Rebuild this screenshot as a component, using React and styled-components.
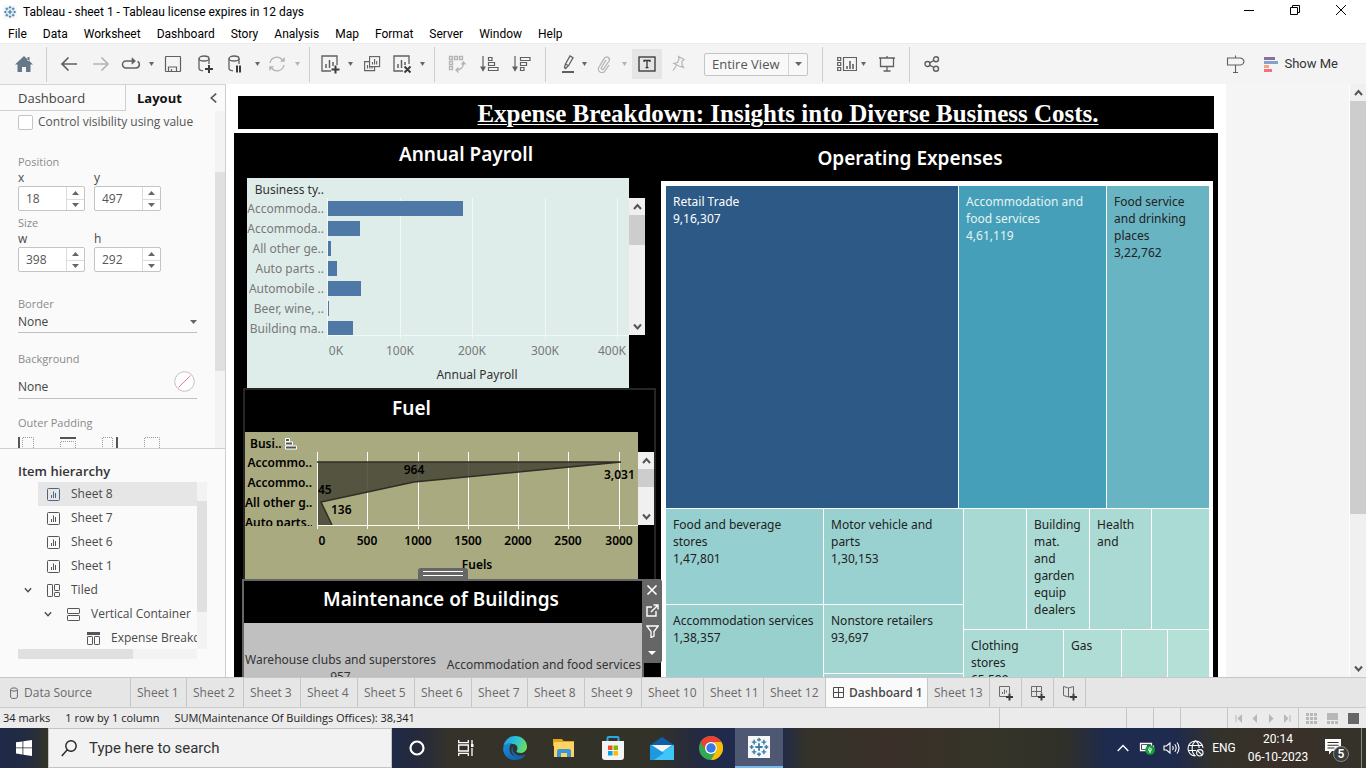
import React from "react";
import styled, { createGlobalStyle, css } from "styled-components";

const ui = `"Open Sans", "Noto Sans", sans-serif`;
const book = `"Noto Sans", "Open Sans", sans-serif`;
const roboto = `Roboto, "Liberation Sans", sans-serif`;

const Global = createGlobalStyle`
  * { box-sizing: border-box; }
  html, body { margin: 0; height: 100%; }
  #root { height: 100%; }
  button, input, select { font: inherit; color: inherit; }
  button { border: 0; background: none; padding: 0; margin: 0; }
  ul, ol { list-style: none; margin: 0; padding: 0; }
  h1, h2, h3, p { margin: 0; font-weight: normal; }
`;

/* ---------- window frame ---------- */
const Window = styled.div`
  display: flex;
  flex-direction: column;
  height: 100vh;
  background: #fff;
  color: #333;
  font: 12px/16px ${ui};
  overflow: hidden;
`;
const TitleBar = styled.header`
  display: flex;
  align-items: center;
  height: 24px;
  flex: none;
  padding-left: 3px;
  gap: 6px;
  color: #000;
  font-family: ${roboto};
`;
const WindowButtons = styled.div`
  display: flex;
  margin-left: auto;
  padding-right: 2px;
  height: 20px;
  align-self: flex-start;
`;
const WindowButton = styled.button`
  display: grid;
  place-items: center;
  width: 46px;
  color: #000;
`;
const MenuBar = styled.nav`
  display: flex;
  align-items: center;
  flex: none;
  height: 19px;
  padding-left: 8px;
  gap: 16px;
  color: #000;
  font-family: ${roboto};
`;
const MenuItem = styled.button`
  line-height: 16px;
`;

/* ---------- toolbar ---------- */
const ToolBar = styled.div`
  display: flex;
  align-items: center;
  flex: none;
  height: 41px;
  background: #f4f4f4;
  border-top: 1px solid #ececec;
  padding: 0 28px 0 12px;
  color: #555;
`;
const Tool = styled.button`
  display: grid;
  place-items: center;
  width: ${(p) => (p.$boxed ? 30 : 24)}px;
  height: 30px;
  flex: none;
  margin-left: ${(p) => p.$ml || 0}px;
  color: ${(p) => (p.$dim ? "#b4b4b4" : "#606060")};
  background: ${(p) => (p.$boxed ? "#e5e5e5" : "transparent")};
`;
const GuideTool = styled(Tool)`
  margin-left: auto;
`;
const CaretButton = styled.button`
  display: grid;
  place-items: center;
  width: 8px;
  height: 24px;
  flex: none;
  margin-left: ${(p) => p.$ml || 0}px;
  color: ${(p) => (p.$dim ? "#b4b4b4" : "#666")};
`;
const Divider = styled.span`
  width: 1px;
  height: 35px;
  flex: none;
  margin-left: ${(p) => p.$ml}px;
  background: #cfcfcf;
`;
const FitBox = styled.div`
  position: relative;
  display: flex;
  align-items: center;
  flex: none;
  width: 104px;
  height: 23px;
  margin-left: 14px;
  background: #f8f8f8;
  border: 1px solid #c4c4c4;
  border-radius: 2px;
`;
const FitSelect = styled.select`
  appearance: none;
  border: 0;
  background: none;
  width: 100%;
  height: 21px;
  padding: 0 0 0 7px;
  font: 13px/20px ${ui};
  color: #555;
`;
const FitArrow = styled.span`
  position: absolute;
  right: 0;
  top: 0;
  display: grid;
  place-items: center;
  width: 19px;
  height: 21px;
  border-left: 1px solid #d4d4d4;
  color: #666;
  pointer-events: none;
`;
const ShowMe = styled.button`
  display: flex;
  align-items: center;
  gap: 6px;
  margin-left: 16px;
  font: 13px/20px ${roboto};
  color: #333;
`;

/* ---------- side pane ---------- */
const Body = styled.div`
  display: flex;
  flex: 1;
  min-height: 0;
`;
const SidePane = styled.aside`
  display: flex;
  flex-direction: column;
  flex: none;
  width: 226px;
  background: #fafafa;
  border-top: 1px solid #d4d4d4;
  border-right: 1px solid #cfcfcf;
  color: #4a4a4a;
`;
const PaneTabs = styled.div`
  display: flex;
  flex: none;
  height: 26px;
`;
const PaneTab = styled.button`
  text-align: left;
  font: ${(p) => (p.$on ? 700 : 400)} 13px/24px ${ui};
  color: ${(p) => (p.$on ? "#111" : "#444")};
  ${(p) =>
    p.$on
      ? css`
          flex: 1;
          padding-left: 11px;
        `
      : css`
          width: 126px;
          padding-left: 18px;
          border-right: 1px solid #cfcfcf;
          border-bottom: 1px solid #cfcfcf;
        `}
`;
const Collapse = styled.button`
  display: grid;
  place-items: center;
  width: 22px;
  color: #555;
`;
const Properties = styled.div`
  display: flex;
  flex: 1;
  min-height: 0;
  overflow: hidden;
  border-bottom: 1px solid #cfcfcf;
`;
const PropertyForm = styled.form`
  flex: 1;
  min-width: 0;
  padding: 3px 18px 0;
`;
const CheckRow = styled.label`
  display: flex;
  align-items: center;
  gap: 5px;
  height: 16px;
  white-space: nowrap;
  color: #555;
`;
const Check = styled.input`
  appearance: none;
  width: 15px;
  height: 15px;
  margin: 0;
  flex: none;
  background: #fff;
  border: 1px solid #c4c4c4;
  border-radius: 2px;
`;
const Caption = styled.div`
  display: block;
  margin-top: ${(p) => p.$mt}px;
  font-size: 11px;
  line-height: 16px;
  color: #8a8a8a;
`;
const Pair = styled.div`
  display: flex;
  gap: 9px;
`;
const SpinField = styled.div`
  width: 67px;
`;
const SpinLabel = styled.label`
  display: block;
  line-height: 16px;
`;
const SpinBox = styled.div`
  display: flex;
  height: 25px;
  background: #fff;
  border: 1px solid #c4c4c4;
  border-radius: 2px;
`;
const SpinInput = styled.input`
  width: 47px;
  min-width: 0;
  border: 0;
  background: none;
  padding: 0 0 0 7px;
  color: #555;
`;
const SpinButtons = styled.div`
  display: grid;
  grid-template-rows: 1fr 1fr;
  flex: 1;
  border-left: 1px solid #dcdcdc;
`;
const SpinButton = styled.button`
  display: grid;
  place-items: center;
  color: #666;
  & + & {
    border-top: 1px solid #dcdcdc;
  }
`;
const LineField = styled.div`
  position: relative;
  display: flex;
  align-items: center;
  justify-content: space-between;
  height: ${(p) => (p.$tall ? 24 : 21)}px;
  margin-top: ${(p) => (p.$tall ? 8 : 0)}px;
  border-bottom: 1px solid #c0c0c0;
  color: #444;
`;
const LineSelect = styled.select`
  appearance: none;
  width: 100%;
  border: 0;
  padding: 0;
  background: none;
`;
const LineArrow = styled.span`
  position: absolute;
  right: 0;
  color: #666;
  line-height: 0;
  pointer-events: none;
`;
const Swatch = styled.button`
  align-self: flex-start;
  margin: -4px 2px 0 0;
  line-height: 0;
`;
const PaddingRow = styled.div`
  display: flex;
  gap: 26px;
  margin-top: 6px;
`;
const ThinTrack = styled.div`
  flex: none;
  width: 10px;
  padding-top: ${(p) => p.$offset}px;
  background: #f3f3f3;
`;
const ThinThumb = styled.div`
  height: ${(p) => p.$size}px;
  background: #e0e0e0;
`;
const Hierarchy = styled.section`
  flex: none;
  height: 228px;
  padding: 12px 18px 0;
`;
const HierarchyTitle = styled.h2`
  font: 600 13px/21px ${ui};
  color: #333;
`;
const TreeFrame = styled.div`
  display: flex;
`;
const Tree = styled.ul`
  width: 179px;
  height: 167px;
  overflow: hidden;
`;
const TreeRow = styled.li`
  display: flex;
  align-items: center;
  height: 24px;
  padding-left: ${(p) => p.$depth * 20}px;
  white-space: nowrap;
`;
const TreeToggle = styled.span`
  display: grid;
  place-items: center;
  width: 20px;
  flex: none;
`;
const TreeLabel = styled.button`
  display: flex;
  align-items: center;
  flex: 1 0 auto;
  height: 24px;
  gap: 11px;
  padding-left: 9px;
  background: ${(p) => (p.$on ? "#e6e6e6" : "transparent")};
  svg {
    color: ${(p) => (p.$on ? "#4a6785" : "#555")};
  }
`;
const FlatTrack = styled.div`
  width: 179px;
  height: 10px;
  background: #f3f3f3;
`;
const FlatThumb = styled.div`
  width: 115px;
  height: 10px;
  background: #e0e0e0;
`;

/* ---------- dashboard ---------- */
const Viewport = styled.main`
  display: flex;
  flex: 1;
  min-width: 0;
  overflow: hidden;
  background: #f5f5f5;
`;
const Dashboard = styled.div`
  flex: 0 1 1000px;
  background: #fff;
  padding: 12px 8px 0;
`;
const Banner = styled.h1`
  height: 33px;
  margin: 0 4px 4px;
  padding-left: 124px;
  background: #000;
  color: #fff;
  text-align: center;
  text-decoration: underline;
  text-decoration-thickness: 1px;
  text-underline-offset: 2px;
  font: bold 25px/36px "Liberation Serif", serif;
  white-space: nowrap;
  overflow: hidden;
`;
const Board = styled.div`
  display: flex;
  background: #000;
  padding: 0 5px 0 8px;
  min-height: 700px;
`;
const LeftColumn = styled.div`
  flex: none;
  width: 419px;
`;
const RightColumn = styled.div`
  flex: 1;
  min-width: 0;
`;
const SheetTitle = styled.h2`
  height: ${(p) => p.$h}px;
  line-height: ${(p) => p.$lh}px;
  padding-left: ${(p) => p.$pl || 0}px;
  padding-right: ${(p) => p.$pr || 0}px;
  font-family: ${book};
  font-size: 19px;
  font-weight: 600;
  color: #fff;
  text-align: center;
`;
const PayrollSheet = styled.section`
  display: flex;
  align-items: flex-start;
  height: 210px;
  margin-left: 5px;
`;
const PayrollView = styled.div`
  display: flex;
  width: 382px;
  height: 100%;
  background: #dfedea;
`;
const PayrollLabels = styled.ul`
  width: 77px;
  margin-right: -2px;
  flex: none;
  height: 157px;
  overflow: hidden;
  text-align: right;
  white-space: nowrap;
  font: 12px/20px ${book};
  color: #787878;
`;
const PayrollHead = styled.li`
  height: 21px;
  line-height: 23px;
  color: #333;
`;
const PayrollName = styled.li`
  height: 20px;
`;
const SheetScroll = styled.div`
  display: flex;
  flex-direction: column;
  flex: none;
  width: 16px;
  height: ${(p) => p.$h}px;
  margin-top: 20px;
  background: #f0f0f0;
`;
const ScrollButton = styled.button`
  display: grid;
  place-items: center;
  width: 100%;
  height: 17px;
  flex: none;
  color: #555;
`;
const ScrollThumb = styled.div`
  height: ${(p) => p.$size}px;
  margin-bottom: auto;
  background: #cdcdcd;
`;
const FuelSheet = styled.section`
  width: 413px;
  margin-left: 1px;
  border: 2px solid #262626;
  border-bottom: 0;
`;
const FuelBody = styled.div`
  display: flex;
`;
const FuelView = styled.div`
  display: flex;
  width: 393px;
  height: 147px;
  background: #a9aa7f;
`;
const FuelLabels = styled.ul`
  width: 67px;
  flex: none;
  height: 94px;
  overflow: hidden;
  text-align: right;
  white-space: nowrap;
  font: 600 12px/20px ${book};
  color: #000;
`;
const FuelHead = styled.li`
  display: flex;
  align-items: center;
  gap: 3px;
  height: 21px;
  padding: 2px 0 0 5px;
`;
const FuelName = styled.li`
  height: 20px;
`;
const SelectedCard = styled.section`
  position: relative;
  width: 402px;
  border: 2px solid #666;
`;
const Grip = styled.span`
  position: absolute;
  left: 174px;
  top: -13px;
  display: grid;
  place-items: center;
  width: 50px;
  height: 12px;
  background: #666;
  border-radius: 3px 3px 0 0;
`;
const CardTools = styled.div`
  position: absolute;
  left: 398px;
  top: -2px;
  display: flex;
  flex-direction: column;
  align-items: center;
  width: 20px;
  height: 84px;
  background: #666;
  border-radius: 0 3px 3px 0;
`;
const CardTool = styled.button`
  display: grid;
  place-items: center;
  height: 21px;
  color: #fff;
`;
const CardBody = styled.div`
  display: flex;
  justify-content: space-between;
  height: 160px;
  padding: 28px 1px 0;
  background: #c0c0c0;
  font: 12px/17px ${book};
  color: #333;
  white-space: nowrap;
  text-align: center;
`;
const BubbleLabel = styled.p`
  padding-top: ${(p) => p.$drop || 0}px;
`;
const TreemapFrame = styled.section`
  display: flex;
  flex-direction: column;
  gap: 1px;
  padding: 5px 4px 5px 5px;
  background: #fff;
  font: 12px/17px ${book};
`;
const MapGrid = styled.div`
  display: grid;
  grid-template-columns: ${(p) => p.$cols || "1fr"};
  grid-template-rows: ${(p) => p.$rows || "1fr"};
  gap: 1px;
  min-width: 0;
`;
const Cell = styled.div`
  padding: 7px 8px 0 7px;
  min-width: 0;
  overflow: hidden;
  background: ${(p) => p.$bg};
  color: ${(p) => p.$fg || "#222"};
`;
const PageScroll = styled.div`
  display: flex;
  flex-direction: column;
  flex: none;
  width: 17px;
  margin-left: auto;
  background: #f0f0f0;
  border-left: 1px solid #fff;
`;

/* ---------- sheet tabs and status ---------- */
const SheetTabs = styled.nav`
  position: relative;
  display: flex;
  flex: none;
  height: 31px;
  background: #e6e6e6;
  border-top: 1px solid #c6c6c6;
  border-bottom: 1px solid #cacaca;
  font: 12px/28px ${ui};
  color: #6a6a6a;
`;
const SheetTab = styled.button`
  display: flex;
  align-items: center;
  gap: 6px;
  flex: none;
  width: ${(p) => p.$w}px;
  padding-left: ${(p) => p.$pl || 6}px;
  border-right: 1px solid #c6c6c6;
  white-space: nowrap;
  ${(p) =>
    p.$on &&
    css`
      gap: 5px;
      background: #fafafa;
      font-weight: 600;
      color: #4a4a4a;
    `}
`;
const StatusBar = styled.footer`
  display: flex;
  align-items: center;
  flex: none;
  height: 20px;
  padding-left: 3px;
  background: #ebebeb;
  font: 11px/16px ${ui};
  color: #222;
`;
const StatusText = styled.span`
  margin-right: 15px;
  white-space: nowrap;
`;
const StatusSlots = styled.div`
  display: flex;
  margin-left: auto;
  height: 20px;
`;
const Slot = styled.div`
  display: flex;
  align-items: center;
  justify-content: center;
  gap: ${(p) => p.$gap || 0}px;
  width: ${(p) => p.$w}px;
  border-left: 1px solid #c6c6c6;
  color: ${(p) => p.$fg || "#b8b8b8"};
`;
const SlotButton = styled.button`
  line-height: 0;
  color: inherit;
`;

/* ---------- taskbar ---------- */
const TaskBar = styled.footer`
  display: flex;
  flex: none;
  height: 40px;
  color: #fff;
  background: linear-gradient(
    90deg,
    #1f2a48 0,
    #232b42 2%,
    #33332a 3.4%,
    #1f2a48 28.5%,
    #24293c 30.5%,
    #353329 33%,
    #333228 48%,
    #242a40 51%,
    #1f2a4c 53%,
    #1f2a4c 57%,
    #34322a 59%,
    #3a3029 65%,
    #353428 73%,
    #30302a 78%,
    #1e2a4e 81%,
    #1e2a4e 86%,
    #33322a 89%,
    #3a3029 94%,
    #33332a 100%
  );
`;
const TaskButton = styled.button`
  display: grid;
  place-items: center;
  width: ${(p) => (p.$start ? 48 : 49)}px;
  flex: none;
  ${(p) =>
    p.$on &&
    css`
      width: 48px;
      background: #4e5872;
      border-bottom: 2px solid #76b9ed;
    `}
`;
const Search = styled.label`
  display: flex;
  align-items: center;
  gap: 12px;
  flex: none;
  width: 344px;
  padding-left: 12px;
  background: #f2f2f2;
  border: 1px solid #c4c4c4;
  color: #222;
`;
const SearchInput = styled.input`
  flex: 1;
  min-width: 0;
  border: 0;
  background: none;
  padding: 0;
  font: 15px/20px ${roboto};
  &::placeholder {
    color: #333;
    opacity: 1;
  }
`;
const Tray = styled.div`
  display: flex;
  align-items: center;
  margin-left: auto;
  font: 12px/18px ${roboto};
`;
const TrayButton = styled.button`
  display: grid;
  place-items: center;
  width: 24px;
  height: 40px;
`;
const Language = styled.button`
  width: 34px;
`;
const Clock = styled.time`
  width: 74px;
  text-align: center;
`;
const Notice = styled.button`
  width: 46px;
  padding: 4px 2px 0 0;
  display: grid;
  place-items: center;
`;
const PeekDesktop = styled.span`
  width: 5px;
  height: 40px;
  border-left: 1px solid #8a8a82;
`;

/* ---------- icons ---------- */
const Icon = ({ w = 18, h = w, sw = 1.3, children, ...rest }) => (
  <svg
    width={w}
    height={h}
    viewBox={`0 0 ${w} ${h}`}
    fill="none"
    stroke="currentColor"
    strokeWidth={sw}
    aria-hidden="true"
    {...rest}
  >
    {children}
  </svg>
);

const Triangle = ({ up, w = 5 }) => (
  <svg width={w} height={4} viewBox="0 0 8 5" preserveAspectRatio="none" fill="currentColor" aria-hidden="true">
    <path d={up ? "M0 5h8L4 0z" : "M0 0h8L4 5z"} />
  </svg>
);

const Caret = ({ ml, dim, label }) => (
  <CaretButton $ml={ml} $dim={dim} aria-label={label}>
    <Triangle />
  </CaretButton>
);

const Chevron = ({ dir = "up", size = 9, sw = 2 }) => {
  const d = { up: "M1 7l3.500-4 3.500 4", down: "M1 2.500l3.500 4 3.500-4", left: "M6.500 .5l-4.500 4 4.500 4" }[dir];
  return (
    <svg width={size} height={size} viewBox="0 0 9 9" fill="none" stroke="currentColor" strokeWidth={sw} aria-hidden="true">
      <path d={d} />
    </svg>
  );
};

const plus = (x, y, r = 4) => <path d={`M${x - r} ${y}h${2 * r}M${x} ${y - r}v${2 * r}`} strokeWidth="2" stroke="#3c3c3c" />;

const logoMarks = [
  [8, 8, 3, 1.2],
  [8, 2, 1.6, 0.9],
  [8, 14, 1.6, 0.9],
  [2, 8, 1.6, 0.9],
  [14, 8, 1.6, 0.9],
  [4, 4, 1.9, 0.9],
  [12, 4, 1.9, 0.9],
  [4, 12, 1.9, 0.9],
  [12, 12, 1.9, 0.9],
];
const TableauMark = ({ size, color }) => (
  <svg width={size} height={size} viewBox="-1 -1 18 18" aria-hidden="true">
    <rect x="-1" y="-1" width="18" height="18" fill="#f6f8fa" />
    {logoMarks.map(([x, y, r, sw]) => (
      <path key={`${x}-${y}`} d={`M${x - r} ${y}h${2 * r}M${x} ${y - r}v${2 * r}`} stroke={color} strokeWidth={sw + 0.3} />
    ))}
  </svg>
);

const BarsIcon = () => (
  <Icon w={13} sw={1}>
    <rect x=".5" y=".5" width="12" height="12" rx="1" />
    <path d="M4.500 10V7M6.500 10V3.500M8.500 10V5" />
  </Icon>
);
const TiledIcon = () => (
  <Icon w={13} sw={1}>
    <rect x=".5" y=".5" width="5" height="12" rx=".6" />
    <rect x="7.500" y=".5" width="5" height="6" rx=".6" />
    <rect x="7.500" y="8.500" width="5" height="4" rx=".6" />
  </Icon>
);
const VerticalIcon = () => (
  <Icon w={13} sw={1}>
    <rect x=".5" y=".5" width="12" height="5" rx=".6" />
    <rect x=".5" y="7.500" width="12" height="5" rx=".6" />
  </Icon>
);
const HeaderIcon = () => (
  <Icon w={13} sw={1}>
    <path d="M0 1.500h13" strokeWidth="3" />
    <rect x=".5" y="4.500" width="5" height="8" rx=".6" />
    <rect x="7.500" y="4.500" width="5" height="8" rx=".6" />
  </Icon>
);

/* ---------- data ---------- */
const menus = ["File", "Data", "Worksheet", "Dashboard", "Story", "Analysis", "Map", "Format", "Server", "Window", "Help"];

const payroll = [
  ["Accommoda..", 186],
  ["Accommoda..", 44],
  ["All other ge..", 4],
  ["Auto parts ..", 12.5],
  ["Automobile ..", 46],
  ["Beer, wine, ..", 1.4],
  ["Building ma..", 35],
];

const tree = [
  { label: "Sheet 8", depth: 0, icon: BarsIcon, on: true },
  { label: "Sheet 7", depth: 0, icon: BarsIcon },
  { label: "Sheet 6", depth: 0, icon: BarsIcon },
  { label: "Sheet 1", depth: 0, icon: BarsIcon },
  { label: "Tiled", depth: 0, icon: TiledIcon, open: true },
  { label: "Vertical Container", depth: 1, icon: VerticalIcon, open: true },
  { label: "Expense Breakdown", depth: 2, icon: HeaderIcon },
];

const sheets = [
  ["Sheet 1", 56],
  ["Sheet 2", 57],
  ["Sheet 3", 57],
  ["Sheet 4", 57],
  ["Sheet 5", 57],
  ["Sheet 6", 57],
  ["Sheet 7", 56],
  ["Sheet 8", 57],
  ["Sheet 9", 57],
  ["Sheet 10", 62],
  ["Sheet 11", 60],
  ["Sheet 12", 62],
];

/* ---------- parts ---------- */
function Toolbar() {
  return (
    <ToolBar role="toolbar" aria-label="Main toolbar">
      <Tool aria-label="Start page">
        <svg width="18" height="16" viewBox="0 0 18 16" fill="#67778a" aria-hidden="true">
          <path d="M9 0L0 8.500h2.500V16h4.500v-5h4v5h4.500V8.500H18zM12.500 1h2v4h-2z" />
        </svg>
      </Tool>
      <Divider $ml={10} />
      <Tool $ml={10} aria-label="Undo">
        <Icon w={18} h={16} sw={1.7}><path d="M17 8H2M8.500 1.500L2 8l6.500 6.500" /></Icon>
      </Tool>
      <Tool $ml={8} $dim aria-label="Redo">
        <Icon w={18} h={16} sw={1.7}><path d="M1 8h15M9.500 1.500L16 8l-6.500 6.500" /></Icon>
      </Tool>
      <Tool $ml={6} aria-label="Replay">
        <Icon w={20} h={14} sw={1.5}>
          <path d="M12 4H5a3.500 3.500 0 000 7h10a3.500 3.500 0 001.500-6.600" />
          <path d="M11 .8L14.500 4 11 7.200z" fill="currentColor" strokeWidth=".6" />
        </Icon>
      </Tool>
      <Caret ml={4} label="Replay options" />
      <Tool $ml={6} aria-label="Save">
        <Icon w={18} sw={1.2}><rect x="1.500" y="1.500" width="15" height="15" rx=".5" /><path d="M4.500 16.500v-4.500h8v4.500M7.500 16.500v-2.500" /></Icon>
      </Tool>
      <Tool $ml={8} aria-label="New data source">
        <Icon w={18} h={20}>
          <ellipse cx="8" cy="4.500" rx="5" ry="2.500" />
          <path d="M3 4.500v10c0 1 1.500 2 4 2.300M13 4.500V10" />
          {plus(13, 15)}
        </Icon>
      </Tool>
      <Tool $ml={6} aria-label="Pause auto updates">
        <Icon w={18} h={20}>
          <ellipse cx="8" cy="4.500" rx="5" ry="2.500" />
          <path d="M3 4.500v10c0 1 1.500 2 4 2.300M13 4.500V10" />
          <path d="M11 11.500v7M14 11.500v7" strokeWidth="2" stroke="#3c3c3c" />
        </Icon>
      </Tool>
      <Caret ml={6} label="Update options" />
      <Tool $ml={4} $dim aria-label="Run update">
        <Icon w={18}>
          <path d="M2 8a7 7 0 0112.500-3M16 10a7 7 0 01-12.500 3" />
          <path d="M16.500 2.500v4h-4zM1.500 15.500v-4h4z" fill="currentColor" strokeWidth=".5" />
        </Icon>
      </Tool>
      <Caret ml={4} dim label="Run options" />
      <Divider $ml={8} />
      <Tool $ml={8} aria-label="New worksheet">
        <Icon w={20}>
          <path d="M11 17H2V2h15v9" />
          <path d="M6 14v-4M9.500 14V6M13 12V8" strokeWidth="1.500" />
          {plus(15.5, 15.5)}
        </Icon>
      </Tool>
      <Caret ml={4} label="New sheet options" />
      <Tool $ml={6} aria-label="Duplicate">
        <Icon w={18} sw={1.1}>
          <rect x="6.600" y="1.600" width="10" height="10" />
          <path d="M6.600 6.600h-5v9h10v-4M9.500 9.500V7M11.600 9.500V4M13.700 9.500V6M4.500 13.500V10M6.800 13.500V12M9 13.500V12" />
        </Icon>
      </Tool>
      <Tool $ml={6} aria-label="Clear sheet">
        <Icon w={20}>
          <path d="M11 17H2V2h15v8" />
          <path d="M6 14v-4M9.500 14V6M13 11V8" strokeWidth="1.500" />
          <path d="M12.500 12.500l6 6M18.500 12.500l-6 6" strokeWidth="2" stroke="#3c3c3c" />
        </Icon>
      </Tool>
      <Caret ml={4} label="Clear options" />
      <Divider $ml={8} />
      <Tool $ml={10} $dim aria-label="Swap rows and columns">
        <Icon w={18}>
          <path d="M1.500 1.500h3v3h-3zM6.500 1.500h3v3h-3zM11.500 1.500h3v3h-3zM1.500 6.500h3v3h-3zM1.500 11.500h3v3h-3z" />
          <path d="M15.500 8c.3 4-3 7-7 7M13.500 9.500l2-2.500 2 2.500M10.500 12.500L8 15l2.500 2.500" />
        </Icon>
      </Tool>
      <Tool $ml={8} aria-label="Sort ascending">
        <Icon w={19} h={16} sw={1.2}>
          <path d="M3 0v12" />
          <path d="M1 11l2 3.500L5 11z" fill="currentColor" />
          <path d="M8.500 1.500h3.500v3H8.500zM8.500 6.500h6v3h-6zM8.500 11.500h9.500v3H8.500z" />
        </Icon>
      </Tool>
      <Tool $ml={8} aria-label="Sort descending">
        <Icon w={19} h={16} sw={1.2}>
          <path d="M3 0v12" />
          <path d="M1 11l2 3.500L5 11z" fill="currentColor" />
          <path d="M8.500 1.500h9.500v3H8.500zM8.500 6.500h6v3h-6zM8.500 11.500h3.500v3H8.500z" />
        </Icon>
      </Tool>
      <Divider $ml={12} />
      <Tool $ml={10} aria-label="Highlight">
        <Icon w={14} h={18}>
          <path d="M3.500 12.500l1-3.500L9 1l3 1.700-4.500 8-3 2.800zM4.500 9l3 1.700" />
          <path d="M1 17h12" strokeWidth="2" />
        </Icon>
      </Tool>
      <Caret label="Highlight options" />
      <Tool $ml={4} $dim aria-label="Group members">
        <Icon w={16} h={18}>
          <path d="M10 5l-4.500 7.500a1.300 1.300 0 002.200 1.400L13 6a2.600 2.600 0 00-4.500-2.800L3 12a3.600 3.600 0 006 4l4-6" />
        </Icon>
      </Tool>
      <Caret ml={4} dim label="Group options" />
      <Tool $ml={4} $boxed aria-label="Show mark labels">
        <Icon w={18} h={16} sw={1.3} stroke="#333">
          <rect x="1" y="1" width="16" height="14" />
          <path d="M6 6V4.500h6V6M9 4.500v7M7.500 11.700h3" />
        </Icon>
      </Tool>
      <Tool $ml={4} $dim aria-label="Fix axes">
        <Icon w={14} h={18} sw={1.2}><path d="M7.500 1.500l5.500 3-2 1.500v4l1.500 2.500-4.500-1.500L3 8.500l3.500-1L8 4zM5.500 10.500L2 15.500" /></Icon>
      </Tool>
      <FitBox>
        <FitSelect aria-label="Fit" defaultValue="Entire View"><option>Entire View</option></FitSelect>
        <FitArrow><Triangle w={7} /></FitArrow>
      </FitBox>
      <Divider $ml={14} />
      <Tool $ml={12} aria-label="Show or hide cards">
        <Icon w={20} h={16} sw={1.2}>
          <path d="M.7 1.500h3v3h-3zM.7 6.500h3v3h-3zM.7 11.500h3v3h-3zM6.500 1.500h13v13h-13z" />
          <path d="M10 13v-3M13 13V5M16 13V8" strokeWidth="1.600" />
        </Icon>
      </Tool>
      <Caret label="Card options" />
      <Tool $ml={8} aria-label="Presentation mode">
        <Icon w={18} h={16}><path d="M1 2h16M2.500 2v8.500h13V2M9 0v2M9 10.500V15M5.500 15h7" /></Icon>
      </Tool>
      <Divider $ml={10} />
      <Tool $ml={10} aria-label="Share">
        <Icon w={16} sw={1.4}>
          <circle cx="3.500" cy="8" r="2.500" /><circle cx="12" cy="3.200" r="2.500" /><circle cx="12" cy="12.800" r="2.500" />
          <path d="M5.700 6.800l4-2.300M5.700 9.200l4 2.300" />
        </Icon>
      </Tool>
      <GuideTool aria-label="Guide">
        <Icon w={20} h={18} sw={1.1}><path d="M1.500 3h13q3 .5 3.500 3.500-.5 3-3.500 3.500h-13zM9.500 .5V3M9.500 10v7.500M7 17.500h5" /></Icon>
      </GuideTool>
      <ShowMe>
        <svg width="14" height="15" viewBox="0 0 14 15" aria-hidden="true">
          <path d="M0 0h11v3H0z" fill="#8d6f9b" /><path d="M0 4h14v3H0z" fill="#82a3cd" />
          <path d="M0 8h5v3H0z" fill="#f3a683" /><path d="M0 12h8v3H0z" fill="#f5707c" />
        </svg>
        Show Me
      </ShowMe>
    </ToolBar>
  );
}

function Spinner({ name, value }) {
  return (
    <SpinField>
      <SpinLabel htmlFor={`spin-${name}`}>{name}</SpinLabel>
      <SpinBox>
        <SpinInput id={`spin-${name}`} defaultValue={value} />
        <SpinButtons>
          <SpinButton type="button" aria-label={`Increase ${name}`}><Triangle up w={7} /></SpinButton>
          <SpinButton type="button" aria-label={`Decrease ${name}`}><Triangle w={7} /></SpinButton>
        </SpinButtons>
      </SpinBox>
    </SpinField>
  );
}

function LayoutPane() {
  const edges = ["M1 0v16", "M0 1h16", "M15 0v16", ""];
  const boxes = ["M4.500 16V.5H15.500V16", "M.5 16V4.500H15.500V16", "M.5 16V.5H10.500V16", "M.5 16V.5H15.500V16"];
  return (
    <SidePane>
      <PaneTabs>
        <PaneTab>Dashboard</PaneTab>
        <PaneTab $on>Layout</PaneTab>
        <Collapse aria-label="Collapse pane"><Chevron dir="left" size={10} sw={1.4} /></Collapse>
      </PaneTabs>
      <Properties>
        <PropertyForm>
          <CheckRow><Check type="checkbox" />Control visibility using value</CheckRow>
          <Caption $mt={24}>Position</Caption>
          <Pair><Spinner name="x" value="18" /><Spinner name="y" value="497" /></Pair>
          <Caption $mt={4}>Size</Caption>
          <Pair><Spinner name="w" value="398" /><Spinner name="h" value="292" /></Pair>
          <Caption as="label" htmlFor="border" $mt={24}>Border</Caption>
          <LineField>
            <LineSelect id="border" defaultValue="None"><option>None</option></LineSelect>
            <LineArrow><Triangle w={7} /></LineArrow>
          </LineField>
          <Caption $mt={18}>Background</Caption>
          <LineField $tall>
            <span>None</span>
            <Swatch type="button" aria-label="Background colour">
              <Icon w={21} sw={1}><circle cx="10.500" cy="10.500" r="9.800" fill="#fff" stroke="#c0c0c0" /><path d="M4.500 16.500l12-12" stroke="#e0808c" /></Icon>
            </Swatch>
          </LineField>
          <Caption $mt={16}>Outer Padding</Caption>
          <PaddingRow>
            {edges.map((edge, i) => (
              <svg key={boxes[i]} width="16" height="16" fill="none" stroke="#555" aria-hidden="true">
                <path d={boxes[i]} stroke="#999" strokeDasharray="1 1" />
                {edge && <path d={edge} strokeWidth="2" />}
              </svg>
            ))}
          </PaddingRow>
        </PropertyForm>
        <ThinTrack $offset={61}><ThinThumb $size={199} /></ThinTrack>
      </Properties>
      <Hierarchy>
        <HierarchyTitle>Item hierarchy</HierarchyTitle>
        <TreeFrame>
          <Tree>
            {tree.map(({ label, depth, icon: Glyph, on, open }) => (
              <TreeRow key={label} $depth={depth}>
                <TreeToggle>{open && <Chevron dir="down" size={8} sw={1.5} />}</TreeToggle>
                <TreeLabel $on={on}><Glyph />{label}</TreeLabel>
              </TreeRow>
            ))}
          </Tree>
          <ThinTrack $offset={19}><ThinThumb $size={111} /></ThinTrack>
        </TreeFrame>
        <FlatTrack><FlatThumb /></FlatTrack>
      </Hierarchy>
    </SidePane>
  );
}

function PayrollChart() {
  const step = 72.5;
  const ticks = [["0K", 14], ["100K", 78], ["200K", 150], ["300K", 223], ["400K", 290]];
  return (
    <svg width="307" height="210" fontFamily={book} fontSize="12" aria-label="Annual payroll by business type">
      {ticks.map(([t], i) => (
        <path key={t} d={`M${Math.round(5 + step * i) + 0.5} 20V161`} stroke="#f4f7f6" />
      ))}
      {payroll.map(([name, v], i) => (
        <rect key={i} x="6" y={23 + 20 * i} width={Math.max(1, Math.round((v * step) / 100))} height={i === 6 ? 14 : 15} fill="#4e79a7" />
      ))}
      <path d="M5 157.500h302" stroke="#f4f7f6" />
      {ticks.map(([t, x]) => (
        <text key={t} x={x} y="177" textAnchor="middle" fill="#787878">{t}</text>
      ))}
      <text x="155" y="201" textAnchor="middle" fill="#333">Annual Payroll</text>
    </svg>
  );
}

function FuelChart() {
  const grid = [5, 55, 106, 156, 206, 256, 307];
  const names = ["0", "500", "1000", "1500", "2000", "2500", "3000"];
  return (
    <svg width="326" height="147" fontFamily={book} fontSize="12" fontWeight="600" aria-label="Fuels by business type">
      {grid.map((x) => (
        <path key={x} d={`M${x + 0.5} 20V97`} stroke="#fff" />
      ))}
      <path d="M6 30H309L102 50 9 70 20 93H6z" fill="#484838" fillOpacity=".88" />
      <path d="M5 30H309L102 50 9 70 20 93" fill="none" stroke="#2e2e26" strokeWidth="1.500" />
      <path d="M5 93.500h321" stroke="#fff" />
      <g fill="#000">
        {names.map((n, i) => (
          <text key={n} x={i ? grid[i] : 10} y="113" textAnchor="middle">{n}</text>
        ))}
        <text x="102" y="42" textAnchor="middle">964</text>
        <text x="292" y="47">3,031</text>
        <text x="6" y="62">45</text>
        <text x="19" y="82">136</text>
        <text x="165" y="137" textAnchor="middle">Fuels</text>
      </g>
    </svg>
  );
}

function Scroller({ h, thumb }) {
  return (
    <SheetScroll $h={h}>
      <ScrollButton aria-label="Scroll up"><Chevron /></ScrollButton>
      <ScrollThumb $size={thumb} />
      <ScrollButton aria-label="Scroll down"><Chevron dir="down" /></ScrollButton>
    </SheetScroll>
  );
}

function Treemap() {
  return (
    <TreemapFrame>
      <MapGrid $cols="292fr 147fr 102fr" $rows="322px">
        <Cell $bg="#2c5985" $fg="#fff">Retail Trade<br />9,16,307</Cell>
        <Cell $bg="#469fb8" $fg="#e4f3f5">Accommodation and food services<br />4,61,119</Cell>
        <Cell $bg="#69b4c3">Food service and drinking places<br />3,22,762</Cell>
      </MapGrid>
      <MapGrid $cols="157fr 139fr 245fr">
        <MapGrid $rows="95px 180px">
          <Cell $bg="#95cfcf">Food and beverage stores<br />1,47,801</Cell>
          <Cell $bg="#98d0ce">Accommodation services<br />1,38,357</Cell>
        </MapGrid>
        <MapGrid $rows="95px 68px 111px">
          <Cell $bg="#99d1d0">Motor vehicle and parts<br />1,30,153</Cell>
          <Cell $bg="#a3d6d1">Nonstore retailers<br />93,697</Cell>
          <Cell $bg="#a3d6d1" />
        </MapGrid>
        <MapGrid $rows="120px 155px">
          <MapGrid $cols="62fr 62fr 61fr 57fr">
            <Cell $bg="#a8d9d3" />
            <Cell $bg="#a9dad3">Building mat. and garden equip dealers</Cell>
            <Cell $bg="#aadad3">Health and</Cell>
            <Cell $bg="#aadbd4" />
          </MapGrid>
          <MapGrid $cols="99fr 57fr 45fr 41fr">
            <Cell $bg="#acdbd5">Clothing<br />stores<br />65,589</Cell>
            <Cell $bg="#b0ddd6">Gas</Cell>
            <Cell $bg="#b3dfd6" />
            <Cell $bg="#b5e0d7" />
          </MapGrid>
        </MapGrid>
      </MapGrid>
    </TreemapFrame>
  );
}

function DashboardView() {
  return (
    <Viewport>
      <Dashboard>
        <Banner>Expense Breakdown: Insights into Diverse Business Costs.</Banner>
        <Board>
          <LeftColumn>
            <SheetTitle $h={45} $lh={43} $pl={29}>Annual Payroll</SheetTitle>
            <PayrollSheet>
              <PayrollView>
                <PayrollLabels>
                  <PayrollHead>Business ty..</PayrollHead>
                  {payroll.map(([name], i) => <PayrollName key={i}>{name}</PayrollName>)}
                </PayrollLabels>
                <PayrollChart />
              </PayrollView>
              <Scroller h={137} thumb={30} />
            </PayrollSheet>
            <FuelSheet>
              <SheetTitle $h={42} $lh={37} $pr={76}>Fuel</SheetTitle>
              <FuelBody>
                <FuelView>
                  <FuelLabels>
                    <FuelHead>
                      Busi..
                      <svg width="12" height="12" fill="#555" stroke="#fff" aria-hidden="true">
                        <path d="M.5 .5h4v3h-4zM.5 4h7v3h-7zM.5 8h11v3H.5z" />
                      </svg>
                    </FuelHead>
                    <FuelName>Accommo..</FuelName>
                    <FuelName>Accommo..</FuelName>
                    <FuelName>All other g..</FuelName>
                    <FuelName>Auto parts..</FuelName>
                  </FuelLabels>
                  <FuelChart />
                </FuelView>
                <Scroller h={73} thumb={18} />
              </FuelBody>
            </FuelSheet>
            <SelectedCard>
              <SheetTitle $h={42} $lh={37} $pr={4}>Maintenance of Buildings</SheetTitle>
              <CardBody>
                <BubbleLabel>Warehouse clubs and superstores<br />957</BubbleLabel>
                <BubbleLabel $drop={5}>Accommodation and food services<br />8,057</BubbleLabel>
              </CardBody>
              <Grip><Icon w={40} h={6} sw={1}><path d="M0 .5h40M0 4.500h40" stroke="#fff" /></Icon></Grip>
              <CardTools>
                <CardTool aria-label="Remove from dashboard"><Icon w={12} sw={1.6}><path d="M1.500 1.500l9 9M10.500 1.500l-9 9" /></Icon></CardTool>
                <CardTool aria-label="Go to sheet"><Icon w={13} sw={1.4}><path d="M6 3H1v9h9V7M5 8l6-6M7.500 1H12v4.500" /></Icon></CardTool>
                <CardTool aria-label="Use as filter"><Icon w={13}><path d="M.8 1h11.400L8 6.500v4.500l-3 1.500v-6z" /></Icon></CardTool>
                <CardTool aria-label="More options"><Triangle w={8} /></CardTool>
              </CardTools>
            </SelectedCard>
          </LeftColumn>
          <RightColumn>
            <SheetTitle $h={48} $lh={50} $pr={54}>Operating Expenses</SheetTitle>
            <Treemap />
          </RightColumn>
        </Board>
      </Dashboard>
      <PageScroll>
        <ScrollButton aria-label="Scroll up"><Chevron /></ScrollButton>
        <ScrollThumb $size={413} />
        <ScrollButton aria-label="Scroll down"><Chevron dir="down" /></ScrollButton>
      </PageScroll>
    </Viewport>
  );
}

function BottomTabs() {
  return (
    <SheetTabs>
      <SheetTab $w={131} $pl={10}>
        <Icon w={8} h={12} sw={1}><ellipse cx="4" cy="2.500" rx="3.400" ry="1.600" /><path d="M.6 2.500v7.500c0 2 6.800 2 6.800 0V2.500" /></Icon>
        Data Source
      </SheetTab>
      {sheets.map(([name, w]) => <SheetTab key={name} $w={w}>{name}</SheetTab>)}
      <SheetTab $w={102} $pl={7} $on>
        <Icon w={11} sw={1}><path d="M.5.5h10v10H.5zM5.500.5v10M.5 5.500h10" /></Icon>
        Dashboard 1
      </SheetTab>
      <SheetTab $w={62}>Sheet 13</SheetTab>
      <SheetTab $w={32} $pl={8} aria-label="New worksheet">
        <Icon w={16} sw={1}><path d="M8 11.500H1.500v-10h10V8M4.500 9V7M6.500 9V4.500M8.500 7.500V5.500" />{plus(11.5, 12, 3.5)}</Icon>
      </SheetTab>
      <SheetTab $w={32} $pl={8} aria-label="New dashboard">
        <Icon w={16} sw={1}><path d="M8 11.500H1.500v-10h10V8M6.500 1.500v10M1.500 6.500h10" />{plus(11.5, 12, 3.5)}</Icon>
      </SheetTab>
      <SheetTab $w={32} $pl={8} aria-label="New story">
        <Icon w={16} sw={1}><path d="M6.500 3L1.500 1.500v9l5 1.500zM6.500 3l5-1.500V8M6.500 12l1.500-.5" />{plus(11.5, 12, 3.5)}</Icon>
      </SheetTab>
    </SheetTabs>
  );
}

function Status() {
  const nav = [
    ["First", "M1 1v7", "M7 0v9L2.500 4.500z"],
    ["Previous", "", "M6 0v9L1.500 4.500z"],
    ["Next", "", "M2 0v9l4.500-4.500z"],
    ["Last", "M7 1v7", "M1 0v9l4.500-4.500z"],
  ];
  return (
    <StatusBar>
      <StatusText>34 marks</StatusText>
      <StatusText>1 row by 1 column</StatusText>
      <StatusText>SUM(Maintenance Of Buildings Offices): 38,341</StatusText>
      <StatusSlots>
        <Slot $w={127} />
        <Slot $w={27} />
        <Slot $w={27} />
        <Slot $w={47} />
        <Slot $w={71} $gap={8}>
          {nav.map(([name, bar, tri]) => (
            <SlotButton key={name} aria-label={`${name} sheet`}>
              <svg width="8" height="9" fill="currentColor" stroke="none" aria-hidden="true">
                {bar && <path d={bar} stroke="currentColor" />}
                <path d={tri} />
              </svg>
            </SlotButton>
          ))}
        </Slot>
        <Slot $w={68} $gap={10}>
          <SlotButton aria-label="Sheet sorter">
            <svg width="11" height="11" fill="currentColor" aria-hidden="true">
              <path d="M0 0h3v3H0zM4 0h3v3H4zM8 0h3v3H8zM0 4h3v3H0zM4 4h3v3H4zM8 4h3v3H8zM0 8h3v3H0zM4 8h3v3H4zM8 8h3v3H8z" />
            </svg>
          </SlotButton>
          <SlotButton aria-label="Filmstrip">
            <svg width="11" height="11" fill="currentColor" aria-hidden="true"><path d="M0 0h11v7H0zM0 8h3v3H0zM4 8h3v3H4zM8 8h3v3H8z" /></svg>
          </SlotButton>
          <SlotButton aria-label="Tabs">
            <svg width="11" height="11" fill="#666" aria-hidden="true"><path d="M0 0h11v11H0z" /></svg>
          </SlotButton>
        </Slot>
      </StatusSlots>
    </StatusBar>
  );
}

function WindowsBar() {
  return (
    <TaskBar>
      <TaskButton $start aria-label="Start">
        <svg width="16" height="16" fill="#fff" aria-hidden="true"><path d="M0 2.300L6.500 1.400V7.500H0zM7.300 1.300L16 0v7.500H7.300zM0 8.300h6.500v6.200L0 13.600zM7.300 8.300H16V16l-8.700-1.300z" /></svg>
      </TaskButton>
      <Search>
        <Icon w={16} h={17} sw={1.4}><circle cx="10" cy="6" r="5.200" /><path d="M6.300 9.800L.8 16" /></Icon>
        <SearchInput type="text" placeholder="Type here to search" aria-label="Type here to search" />
      </Search>
      <TaskButton aria-label="Cortana"><Icon w={16} sw={2.2}><circle cx="8" cy="8" r="6.500" /></Icon></TaskButton>
      <TaskButton aria-label="Task view">
        <Icon w={16} h={16} sw={1.3}><path d="M.7 0v2.700h9.600V0M.7 16v-2.700h9.600V16M.7 5h9.600v6H.7zM14 0v4M14 8v8" /><path d="M13 4h2.500v3H13z" fill="#fff" stroke="none" /></Icon>
      </TaskButton>
      <TaskButton aria-label="Microsoft Edge">
        <svg width="24" height="24" viewBox="0 0 24 24" aria-hidden="true">
          <defs>
            <linearGradient id="edgeTop" x1="0" x2="1" y1=".3" y2=".6"><stop offset="0" stopColor="#1f9fe0" /><stop offset=".5" stopColor="#2cc3d8" /><stop offset="1" stopColor="#6fdf55" /></linearGradient>
            <linearGradient id="edgeLow" x1="0" x2="1" y1="0" y2="1"><stop offset="0" stopColor="#1b8fe0" /><stop offset="1" stopColor="#0c59a4" /></linearGradient>
          </defs>
          <path d="M.3 10.500C1.200 4.500 6 0 12 0c7 0 12 5 12 10.500 0 4-3 6.500-6.500 6.500-3 0-4.500-1.200-3.800-2.300 2-2.700.3-6.700-4-6.700C5.500 7.500 1 8.500.3 10.500z" fill="url(#edgeTop)" />
          <path d="M.2 11.500C1 8.500 5 6.500 8.800 7.500 5.500 9.300 5.500 17 10 19.500c4 2.300 9 1 11.500-.5.8-.5 1 0 .5.700C20 22.500 16 24 12 24 5 24-.6 18.500.2 11.500z" fill="url(#edgeLow)" />
          <path d="M10 10.200C6.500 13.500 9 20 14.500 21c3 .5 5.500-.6 7-2-3.500 1.300-8 .8-10.500-2.500-1.500-2-1.700-4.300-1-6.300z" fill="#1467b3" />
        </svg>
      </TaskButton>
      <TaskButton aria-label="File Explorer">
        <svg width="22" height="20" viewBox="0 0 22 20" aria-hidden="true">
          <path d="M0 1h9l1.500 2H21v5H0z" fill="#e8a317" /><path d="M1 4h20v15H1z" fill="#fcd462" />
          <path d="M4 19v-6q0-2 2-2h10q2 0 2 2v6h-4v-4H8v4z" fill="#3d96d8" />
        </svg>
      </TaskButton>
      <TaskButton aria-label="Microsoft Store">
        <svg width="24" height="24" viewBox="0 0 24 24" aria-hidden="true">
          <path d="M6.500 6V2q0-1 1-1h9q1 0 1 1v4" fill="none" stroke="#2aa8e8" strokeWidth="2" />
          <path d="M1 5h22v16q0 3-3 3H4q-3 0-3-3z" fill="#f4f4f4" />
          <path d="M7 9.500h4.500V14H7z" fill="#f25022" /><path d="M12.500 9.500H17V14h-4.500z" fill="#7fba00" /><path d="M7 15h4.500v4.500H7z" fill="#00a4ef" /><path d="M12.500 15H17v4.500h-4.500z" fill="#ffb900" />
        </svg>
      </TaskButton>
      <TaskButton aria-label="Mail">
        <svg width="24" height="23" viewBox="0 0 24 23" aria-hidden="true">
          <path d="M0 8l12-8 12 8v2H0z" fill="#0f5ea8" /><path d="M0 8h24v15H0z" fill="#28a8ea" />
          <path d="M2 8h20l-10 7z" fill="#f4f4f4" /><path d="M24 8v15H0l14-9z" fill="#3ec6f7" /><path d="M0 8l14 8L4 23H0z" fill="#1f98e2" />
        </svg>
      </TaskButton>
      <TaskButton aria-label="Google Chrome">
        <svg width="24" height="24" viewBox="0 0 24 24" aria-hidden="true">
          <circle cx="12" cy="12" r="12" fill="#34a853" />
          <path d="M1.600 6A12 12 0 0122.400 6H12a6 6 0 00-5.200 9z" fill="#ea4335" />
          <path d="M22.400 6A12 12 0 0112 24l5.200-9A6 6 0 0012 6z" fill="#fbbc05" />
          <circle cx="12" cy="12" r="6" fill="#fff" /><circle cx="12" cy="12" r="4.700" fill="#3b78e7" />
        </svg>
      </TaskButton>
      <TaskButton $on aria-label="Tableau"><TableauMark size={22} color="#3d7ea6" /></TaskButton>
      <Tray>
        <TrayButton aria-label="Show hidden icons"><Icon w={12} h={8} sw={1.4}><path d="M.7 7L6 1.500 11.300 7" /></Icon></TrayButton>
        <TrayButton aria-label="Battery">
          <svg width="16" height="14" fill="none" aria-hidden="true">
            <path d="M1.500 2.500h11v7h-11zM14.500 4.500v3" stroke="#fff" strokeWidth="1.300" /><path d="M3 4h5v4H3z" fill="#fff" />
            <circle cx="11" cy="9" r="4.800" fill="#18a03c" /><path d="M11 6.500c-2 1.700-1.500 3.500 0 3.500s2-1.800 0-3.500zM11 8.500V12" stroke="#fff" />
          </svg>
        </TrayButton>
        <TrayButton aria-label="Volume"><Icon w={17} h={14} sw={1.1}><path d="M1 5h2.500L7 2v10L3.500 9H1zM9.500 5q1.500 2 0 4M11.800 3.300q2.700 3.700 0 7.400M14 1.500q4 5.500 0 11" /></Icon></TrayButton>
        <TrayButton aria-label="Network">
          <Icon w={17} sw={1.1}><path d="M16 8A7.500 7.500 0 108 16M8.500 1C4 4 4 13 8.500 16M8.500 1c2.500 1.500 3.500 4 3.600 7M1.500 5.500h14M1 10.500h8" /><circle cx="12.800" cy="12.800" r="3.200" /><path d="M10.500 10.500l4.600 4.600" /></Icon>
        </TrayButton>
        <Language>ENG</Language>
        <Clock>20:14<br />06-10-2023</Clock>
        <Notice aria-label="5 notifications">
          <svg width="26" height="26" viewBox="0 0 26 26" aria-hidden="true">
            <path d="M1 2h16v12H8l-3 3.500V14H1z" fill="#fff" /><path d="M3.500 5.500h11M3.500 8.200h11M3.500 11h7" stroke="#33332a" strokeWidth="1.100" />
            <circle cx="17" cy="17" r="7.500" fill="#3c3c3c" stroke="#8a8a8a" />
            <text x="17" y="21" textAnchor="middle" fontSize="12" fontWeight="600" fill="#fff">5</text>
          </svg>
        </Notice>
        <PeekDesktop />
      </Tray>
    </TaskBar>
  );
}

export default function App() {
  return (
    <Window>
      <Global />
      <TitleBar>
        <TableauMark size={14} color="#2f74a3" />
        <span>Tableau - sheet 1 - Tableau license expires in 12 days</span>
        <WindowButtons>
          <WindowButton aria-label="Minimize"><Icon w={10} sw={1}><path d="M0 5.500h10" /></Icon></WindowButton>
          <WindowButton aria-label="Restore"><Icon w={10} sw={1}><path d="M.5 2.500h7v7h-7zM2.500 2.500v-2h7v7h-2" /></Icon></WindowButton>
          <WindowButton aria-label="Close"><Icon w={10} sw={1}><path d="M0 0l10 10M10 0L0 10" /></Icon></WindowButton>
        </WindowButtons>
      </TitleBar>
      <MenuBar>
        {menus.map((m) => <MenuItem key={m}>{m}</MenuItem>)}
      </MenuBar>
      <Toolbar />
      <Body>
        <LayoutPane />
        <DashboardView />
      </Body>
      <BottomTabs />
      <Status />
      <WindowsBar />
    </Window>
  );
}
